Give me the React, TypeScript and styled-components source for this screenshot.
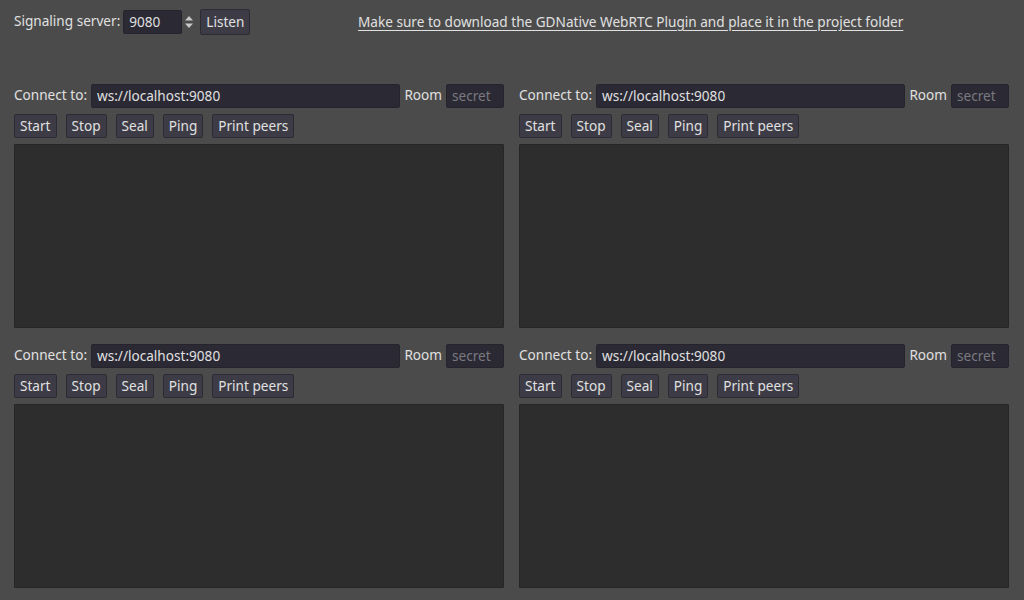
import React from "react";
import styled, { createGlobalStyle } from "styled-components";

const Global = createGlobalStyle`
  html, body { margin: 0; padding: 0; background: #4b4b4b; }
  body { font-family: "Noto Sans", "DejaVu Sans", sans-serif; font-size: 13.6px; color: #e0e0e0; }
  * { box-sizing: border-box; }
`;

const Page = styled.div`
  width: 1024px;
  height: 600px;
  padding: 9px 16px 0 14px;
  display: flex;
  flex-direction: column;
  overflow: hidden;
`;

const TopBar = styled.div`
  display: flex;
  align-items: center;
  height: 26px;
  gap: 3px;
`;

const Label = styled.span`
  color: #e0e0e0;
  white-space: nowrap;
  line-height: 1;
  padding-bottom: 2px;
`;

const Field = styled.div<{ $w?: number; $muted?: boolean }>`
  height: 24px;
  ${(p) => (p.$w ? `width: ${p.$w}px; flex: none;` : "flex: 1;")}
  background: #2a2934;
  border: 1px solid #25242c;
  border-radius: 2px;
  display: flex;
  align-items: center;
  padding: 0 4px 2px 5px;
  color: ${(p) => (p.$muted ? "#7a7980" : "#e0e0e0")};
  white-space: nowrap;
  overflow: hidden;
`;

const Spin = styled.div`
  display: flex;
  align-items: center;
  gap: 2px;
`;

const Arrows = styled.svg`
  width: 10px;
  height: 16px;
  display: block;
`;

const Button = styled.div`
  height: 24px;
  padding: 0 5px 2px;
  background: #3d3c46;
  border: 1px solid #2c2b33;
  border-radius: 2px;
  display: flex;
  align-items: center;
  color: #e0e0e0;
  white-space: nowrap;
`;

const BigButton = styled(Button)`
  height: 26px;
  margin-left: 3px;
`;

const LinkWrap = styled.div`
  flex: 1;
  display: flex;
  justify-content: center;
  padding-bottom: 2px;
`;

const Link = styled.span`
  color: #e0e0e0;
  text-decoration: underline;
  text-underline-offset: 3px;
  white-space: nowrap;
`;

const Grid = styled.div`
  margin-top: 49px;
  display: grid;
  grid-template-columns: 490px 490px;
  column-gap: 15px;
  row-gap: 16px;
`;

const Panel = styled.div`
  display: flex;
  flex-direction: column;
  gap: 6px;
  height: 244px;
`;

const Row = styled.div<{ $gap: number }>`
  display: flex;
  align-items: center;
  gap: ${(p) => p.$gap}px;
`;

const Output = styled.div`
  flex: 1;
  background: #2d2d2d;
  border: 1px solid #262626;
  border-radius: 1px;
`;

const ChatPanel = () => (
  <Panel>
    <Row $gap={4}>
      <Label>Connect to:</Label>
      <Field>ws://localhost:9080</Field>
      <Label>Room</Label>
      <Field $w={58} $muted>secret</Field>
    </Row>
    <Row $gap={9}>
      <Button>Start</Button>
      <Button>Stop</Button>
      <Button>Seal</Button>
      <Button>Ping</Button>
      <Button>Print peers</Button>
    </Row>
    <Output />
  </Panel>
);

export default function App() {
  return (
    <>
      <Global />
      <Page>
        <TopBar>
          <Label>Signaling server:</Label>
          <Spin>
            <Field $w={59}>9080</Field>
            <Arrows viewBox="0 0 10 16">
              <path d="M1 6.5 L5 2 L9 6.5 Z" fill="#c8c8c8" />
              <path d="M1 9.5 L5 14 L9 9.5 Z" fill="#c8c8c8" />
            </Arrows>
          </Spin>
          <BigButton>Listen</BigButton>
          <LinkWrap>
            <Link>Make sure to download the GDNative WebRTC Plugin and place it in the project folder</Link>
          </LinkWrap>
        </TopBar>
        <Grid>
          <ChatPanel />
          <ChatPanel />
          <ChatPanel />
          <ChatPanel />
        </Grid>
      </Page>
    </>
  );
}
